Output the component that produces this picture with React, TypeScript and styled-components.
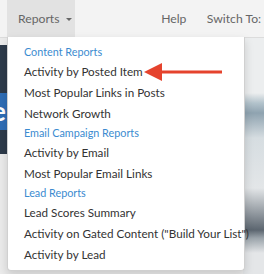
import styled, { createGlobalStyle } from "styled-components";

const GlobalStyle = createGlobalStyle`
  body {
    margin: 0;
    font-family: Lato, "Open Sans", sans-serif;
    background: #ebebeb;
  }
`;

const Page = styled.div`
  position: relative;
  width: 264px;
  height: 274px;
  overflow: hidden;
`;

const NavBar = styled.div`
  display: flex;
  align-items: stretch;
  height: 37px;
  padding-left: 7px;
  background: #f3f3f3;
  border-bottom: 1px solid #dcdcdc;
`;

const NavItem = styled.div<{ $active?: boolean; $w: number }>`
  display: flex;
  align-items: center;
  gap: 6px;
  width: ${(p) => p.$w}px;
  padding-left: ${(p) => (p.$active ? "11px" : "0")};
  box-sizing: border-box;
  font-size: 12.2px;
  color: #666;
  white-space: nowrap;
  background: ${(p) => (p.$active ? "#e2e2e2" : "transparent")};
`;

const Caret = styled.span`
  width: 0;
  height: 0;
  border-left: 3.5px solid transparent;
  border-right: 3.5px solid transparent;
  border-top: 3.5px solid #666;
  margin-top: 2px;
`;

const Content = styled.div`
  display: flex;
  justify-content: space-between;
  height: 236px;
`;

const LeftStrip = styled.div`
  width: 8px;
  display: flex;
  flex-direction: column;
  padding-top: 7px;
`;

const Dark = styled.div<{ $h: number }>`
  height: ${(p) => p.$h}px;
  background: #2d3a4a;
`;

const Band = styled.div`
  height: 37px;
  background: #2f6db5;
  color: #fff;
  font-weight: 700;
  font-size: 26px;
  line-height: 37px;
  overflow: hidden;
  text-indent: -8px;
`;

const RightStrip = styled.div`
  width: 21px;
  background: linear-gradient(
    180deg,
    #eceeef 0px,
    #eceeef 55px,
    #b3c3cc 65px,
    #8fa3b0 75px,
    #d6dde1 100px,
    #e3e6e8 150px,
    #5c6670 192px,
    #9aa3aa 200px,
    #e4e6e8 215px
  );
`;

const Menu = styled.div`
  position: absolute;
  top: 37px;
  left: 7px;
  width: 236px;
  padding: 6px 0 5px;
  background: #fff;
  border: 1px solid #d0d0d0;
  border-top: none;
  border-radius: 0 0 4px 4px;
  box-shadow: 0 4px 10px rgba(0, 0, 0, 0.15);
`;

const MenuHeader = styled.div`
  height: 18px;
  line-height: 18px;
  padding-left: 16px;
  font-size: 10.8px;
  color: #3b8bd0;
  white-space: nowrap;
`;

const MenuItem = styled.div`
  height: 21px;
  line-height: 21px;
  padding-left: 16px;
  font-size: 11.7px;
  color: #333;
  white-space: nowrap;
`;

const Arrow = styled.svg`
  position: absolute;
  left: 144px;
  top: 62px;
`;

const sections = [
  {
    title: "Content Reports",
    items: ["Activity by Posted Item", "Most Popular Links in Posts", "Network Growth"],
  },
  {
    title: "Email Campaign Reports",
    items: ["Activity by Email", "Most Popular Email Links"],
  },
  {
    title: "Lead Reports",
    items: ["Lead Scores Summary", 'Activity on Gated Content ("Build Your List")', "Activity by Lead"],
  },
];

export default function App() {
  return (
    <Page>
      <GlobalStyle />
      <NavBar>
        <NavItem $active $w={71}>
          Reports <Caret />
        </NavItem>
        <NavItem $w={48} style={{ marginLeft: 86 }}>Help</NavItem>
        <NavItem $w={60}>Switch To:</NavItem>
      </NavBar>
      <Content>
        <LeftStrip>
          <Dark $h={48} />
          <Band>e</Band>
          <Dark $h={24} />
        </LeftStrip>
        <RightStrip />
      </Content>
      <Menu>
        {sections.map((s) => (
          <div key={s.title}>
            <MenuHeader>{s.title}</MenuHeader>
            {s.items.map((it) => (
              <MenuItem key={it}>{it}</MenuItem>
            ))}
          </div>
        ))}
      </Menu>
      <Arrow width="80" height="20" viewBox="0 0 80 20">
        <rect x="16" y="8.5" width="62" height="3" fill="#e5432d" />
        <polygon points="0,10 18,1 18,19" fill="#e5432d" />
      </Arrow>
    </Page>
  );
}
